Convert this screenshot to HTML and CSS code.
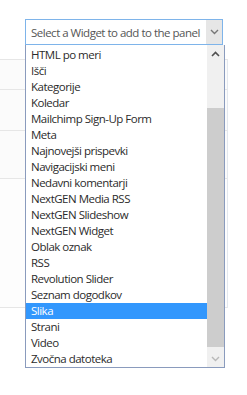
FILE: index.html
```html
<!DOCTYPE html>
<html lang="sl">
<head>
    <meta charset="UTF-8">
    <meta name="viewport" content="width=device-width, initial-scale=1.0">
    <title>Widgets</title>
    <link rel="stylesheet" href="styles.css">
</head>
<body>
<div class="screen">
    <!-- Panel v ozadju -->
    <div class="panel">
        <div class="panel-row row-a"></div>
        <div class="panel-row row-b"></div>
        <div class="panel-row row-c"></div>
        <div class="panel-row row-d"></div>
    </div>

    <!-- Izbira gradnika -->
    <div class="widget-select">
        <div class="select-box">
            <span class="select-text">Select a Widget to add to the panel</span>
            <span class="select-arrow">
                <svg width="9" height="6" viewBox="0 0 9 6"><polyline points="1,1 4.5,4.5 8,1" fill="none" stroke="#777" stroke-width="1.4"/></svg>
            </span>
        </div>
        <div class="dropdown">
            <ul class="options">
                <li>HTML po meri</li>
                <li>Išči</li>
                <li>Kategorije</li>
                <li>Koledar</li>
                <li>Mailchimp Sign-Up Form</li>
                <li>Meta</li>
                <li>Najnovejši prispevki</li>
                <li>Navigacijski meni</li>
                <li>Nedavni komentarji</li>
                <li>NextGEN Media RSS</li>
                <li>NextGEN Slideshow</li>
                <li>NextGEN Widget</li>
                <li>Oblak oznak</li>
                <li>RSS</li>
                <li>Revolution Slider</li>
                <li>Seznam dogodkov</li>
                <li class="selected">Slika</li>
                <li>Strani</li>
                <li>Video</li>
                <li>Zvočna datoteka</li>
            </ul>
            <div class="scrollbar">
                <div class="scroll-btn">
                    <svg width="9" height="6" viewBox="0 0 9 6"><polyline points="1,5 4.5,1.5 8,5" fill="none" stroke="#505050" stroke-width="1.6"/></svg>
                </div>
                <div class="scroll-track">
                    <div class="scroll-thumb"></div>
                </div>
                <div class="scroll-btn">
                    <svg width="9" height="6" viewBox="0 0 9 6"><polyline points="1,1 4.5,4.5 8,1" fill="none" stroke="#b8b8b8" stroke-width="1.4"/></svg>
                </div>
            </div>
        </div>
    </div>
</div>
</body>
</html>
```

FILE: styles.css
```css
body {
    margin: 0;
    padding: 0;
    background: #fff;
    font-family: "Open Sans", "Noto Sans", Arial, sans-serif;
}

.screen {
    position: relative;
    width: 247px;
    height: 395px;
    overflow: hidden;
}

.panel {
    margin-top: 59px;
    width: 227px;
    border-right: 1px solid #e3e8ee;
    border-top: 1px solid #e6e6e6;
    background-color: #fbfbfb;
}

.panel-row {
    border-bottom: 1px solid #e6e6e6;
}

.row-a { height: 29px; }
.row-b { height: 40px; }
.row-c { height: 47px; }
.row-d { height: 128px; background-color: #fdfdfd; }

/* Izbirni seznam leži nad panelom */
.widget-select {
    position: absolute;
    left: 25px;
    top: 19px;
    width: 200px;
}

.select-box {
    display: flex;
    align-items: center;
    width: 198px;
    height: 26px;
    border: 1px solid #7eb4ea;
    background: #fff;
    box-sizing: border-box;
}

.select-text {
    flex: 1;
    padding-left: 5px;
    font-size: 11.5px;
    letter-spacing: -0.5px;
    color: #555;
    white-space: nowrap;
    overflow: hidden;
}

.select-arrow {
    display: flex;
    align-items: center;
    justify-content: center;
    width: 16px;
    height: 24px;
    background-color: #e6e6e6;
}

.dropdown {
    display: flex;
    border: 1px solid #8a9bbd;
    border-top: none;
    background: #fff;
    height: 322px;
}

.options {
    list-style: none;
    margin: 0;
    padding: 2px 0 0 0;
    flex: 1;
}

.options li {
    height: 16px;
    line-height: 16px;
    padding-left: 5px;
    font-size: 11.5px;
    letter-spacing: -0.5px;
    color: #2b2b2b;
    white-space: nowrap;
}

.options li.selected {
    background-color: #3297fd;
    color: #fff;
}

.scrollbar {
    display: flex;
    flex-direction: column;
    width: 17px;
    background-color: #f0f0f0;
}

.scroll-btn {
    display: flex;
    align-items: center;
    justify-content: center;
    height: 17px;
}

.scroll-track {
    flex: 1;
    padding-top: 46px;
    padding-bottom: 3px;
}

.scroll-thumb {
    height: 100%;
    background-color: #cdcdcd;
}
```
